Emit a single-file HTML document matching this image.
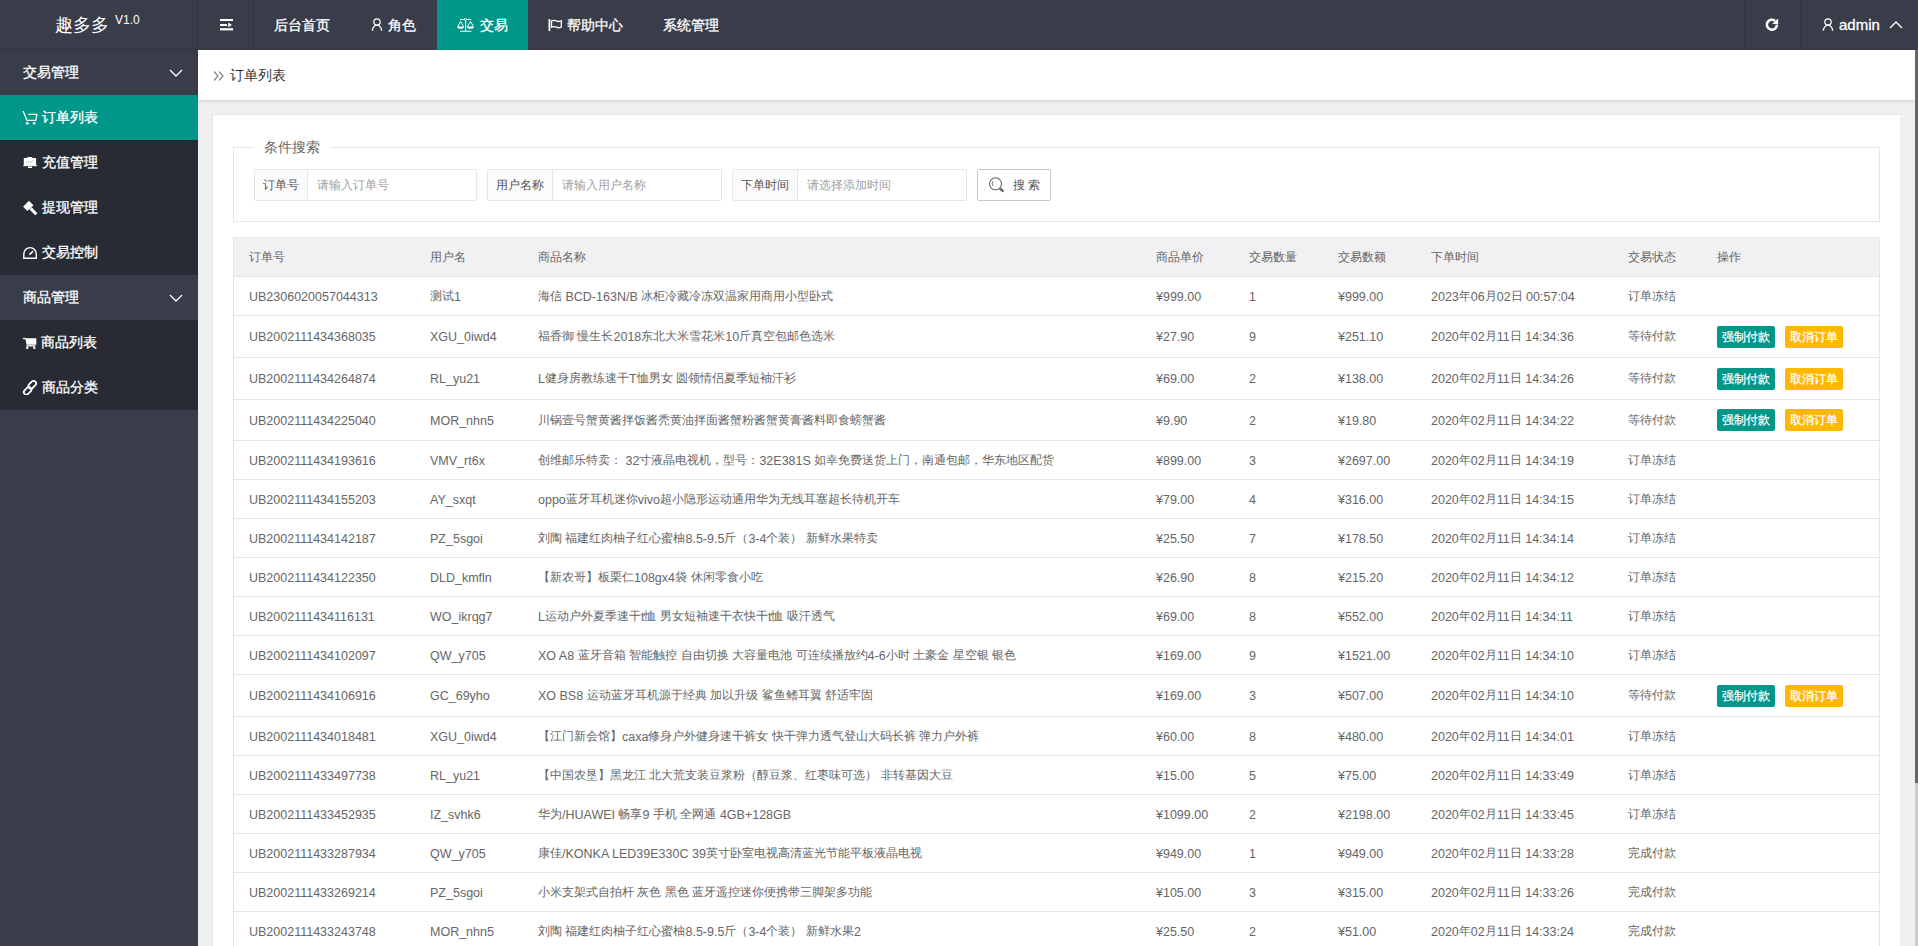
<!DOCTYPE html>
<html><head><meta charset="utf-8">
<style>
*{box-sizing:border-box;margin:0;padding:0}
html,body{width:1918px;height:946px;overflow:hidden;background:#eeeff1;font-family:"Liberation Sans",sans-serif;color:#666}
.abs{position:absolute}
.hdr{position:absolute;left:0;top:0;width:1918px;height:50px;background:#393D49}
.logo{position:absolute;left:0;top:0;width:198px;height:50px;color:#fff}
.logo .t{position:absolute;left:55px;top:13px;font-size:18px;line-height:24px;white-space:nowrap}
.logo .v{position:absolute;left:115px;top:13px;font-size:12px;line-height:14px}
.sep{position:absolute;top:0;width:1px;height:50px;background:#32363f}
.nav{position:absolute;top:0;height:50px;color:#fff;font-size:14px;line-height:50px;white-space:nowrap;-webkit-text-stroke:0.3px #fff}
.nav svg{position:absolute}
.side{position:absolute;left:0;top:50px;width:198px;height:896px;background:#393D49}
.si{position:absolute;left:0;width:198px;height:45px;line-height:45px;color:#fff;font-size:14px;white-space:nowrap;-webkit-text-stroke:0.3px #fff}
.si.g{background:#393D49}
.si.c{background:#282B33}
.si.a{background:#009688}
.si .st{position:absolute;top:0}
.si svg{position:absolute}
.bc{position:absolute;left:198px;top:50px;width:1717px;height:50px;background:#fff;box-shadow:0 1px 3px rgba(0,0,0,.12)}
.card{position:absolute;left:213px;top:115px;width:1687px;height:840px;background:#fff;box-shadow:-1px -1px 1px rgba(0,0,0,.04)}
.sb{position:absolute;left:1915px;top:50px;width:3px;height:896px;background:#cdcdcd}
.sb .th{position:absolute;left:0;top:0;width:3px;height:733px;background:#666}

.fs{position:absolute;left:20px;top:32px;width:1647px;height:75px;border:1px solid #e6e6e6}
.lg{position:absolute;left:41px;top:22px;padding:0 10px;background:#fff;font-size:14px;line-height:20px;color:#666}
.ib{position:absolute;top:54px;height:32px;border:1px solid #e6e6e6;border-radius:2px;background:#fff}
.il{position:absolute;left:0;top:0;height:30px;line-height:30px;background:#FBFBFB;border-right:1px solid #e6e6e6;font-size:12px;color:#333;text-align:center;color:#555}
.ip{position:absolute;top:0;height:30px;line-height:30px;padding-left:9px;font-size:12px;color:#a0a0a0;white-space:nowrap}
.btn{position:absolute;top:54px;width:74px;height:32px;border:1px solid #C9C9C9;border-radius:2px;background:#fff;font-size:12px;line-height:30px;color:#555}
.tb{position:absolute;border:1px solid #e6e6e6}
.th{position:absolute;background:#f1f1f3}
.hl{position:absolute;left:21px;width:1645px;height:1px;background:#e6e6e6}
.tx{position:absolute;font-size:12px;color:#666;white-space:nowrap}
.l{font-size:12.5px;position:relative;top:1px}
.bt{position:absolute;height:22px;line-height:22px;padding:0 5px;font-size:12px;color:#fff;border-radius:2px;white-space:nowrap;-webkit-text-stroke:0.25px #fff}
.bt.g{background:#009688}
.bt.y{background:#FFB800}
</style></head><body>
<div class="hdr">
  <div class="logo"><span class="t">趣多多</span><span class="v">V1.0</span></div>
  <div class="abs" style="left:0;top:49px;width:198px;height:1px;background:#2f333c"></div>
  <div class="sep" style="left:197px"></div>
  <div class="sep" style="left:253px"></div>
  <div class="nav" style="left:198px;width:55px">
    <svg style="left:22px;top:19px" width="13" height="12" viewBox="0 0 13 12"><rect x="0" y="0" width="13" height="2" fill="#fff"/><rect x="0" y="5" width="7" height="2" fill="#fff"/><path d="M8.2 3.6 L12 6 L8.2 8.2Z" fill="#fff"/><rect x="0" y="9.2" width="13" height="2.2" fill="#fff"/></svg>
  </div>
  <div class="nav" style="left:274px">后台首页</div>
  <div class="nav" style="left:370px;width:67px">
    <svg style="left:1px;top:17px" width="12" height="15" viewBox="0 0 12 15"><circle cx="6" cy="5" r="3.2" fill="none" stroke="#fff" stroke-width="1.2"/><path d="M1.4 13.8 A4.6 5.6 0 0 1 10.6 13.8" fill="none" stroke="#fff" stroke-width="1.3"/></svg>
    <span style="position:absolute;left:18px">角色</span>
  </div>
  <div class="nav" style="left:437px;width:91px;background:#009688">
    <svg style="left:20px;top:18px" width="18" height="14" viewBox="0 0 18 14"><path d="M3 1.5 H14.3 M8.6 2.3 V13.3 M3 13.3 H14.3" fill="none" stroke="#fff" stroke-width="1.1"/><circle cx="8.6" cy="1.4" r="1.1" fill="#009688" stroke="#fff" stroke-width="0.9"/><path d="M3.6 3.4 L0.6 8.7 M3.6 3.4 L6.6 8.7 M13.5 3.4 L10.4 8.7 M13.5 3.4 L16.6 8.7" fill="none" stroke="#fff" stroke-width="1"/><path d="M0.2 8.5 H7 A3.4 2.3 0 0 1 0.2 8.5Z M10.1 8.5 H17 A3.45 2.3 0 0 1 10.1 8.5Z" fill="#fff"/></svg>
    <span style="position:absolute;left:43px">交易</span>
  </div>
  <div class="nav" style="left:547px;width:80px">
    <svg style="left:1px;top:19px" width="15" height="13" viewBox="0 0 15 13"><path d="M1.4 0 V12" fill="none" stroke="#fff" stroke-width="1.8"/><path d="M3.5 1.9 Q6 0.7 8.5 1.9 Q11 3.1 13.3 1.8 V8.1 Q11 9.3 8.5 8.2 Q6 7 3.5 8.2 Z" fill="none" stroke="#fff" stroke-width="1.3"/></svg>
    <span style="position:absolute;left:20px">帮助中心</span>
  </div>
  <div class="nav" style="left:663px">系统管理</div>
  <div class="sep" style="left:1744px"></div>
  <div class="sep" style="left:1800px"></div>
  <div class="nav" style="left:1745px;width:55px">
    <svg style="left:20px;top:16px" width="15" height="16" viewBox="0 0 15 16"><path d="M11.9 9 A5 5 0 1 1 10.1 4.9" fill="none" stroke="#fff" stroke-width="2.5"/><path d="M13.1 2.4 L13.1 8.5 L7.2 7.8Z" fill="#fff"/></svg>
  </div>
  <div class="nav" style="left:1801px;width:117px">
    <svg style="left:21px;top:17px" width="12" height="15" viewBox="0 0 12 15"><circle cx="6" cy="5" r="3.2" fill="none" stroke="#fff" stroke-width="1.2"/><path d="M1.4 13.8 A4.6 5.6 0 0 1 10.6 13.8" fill="none" stroke="#fff" stroke-width="1.3"/></svg>
    <span style="position:absolute;left:38px;top:0px;font-size:15px">admin</span>
    <svg style="left:88px;top:21px" width="14" height="8" viewBox="0 0 14 8"><path d="M1 7 L7 1 L13 7" fill="none" stroke="#fff" stroke-width="1.3"/></svg>
  </div>
</div>

<div class="side">
  <div class="si g" style="top:0"><span class="st" style="left:23px">交易管理</span>
    <svg style="left:169px;top:19px" width="14" height="8" viewBox="0 0 14 8"><path d="M1 1 L7 7 L13 1" fill="none" stroke="#fff" stroke-width="1.3"/></svg></div>
  <div class="si a" style="top:45px"><span class="st" style="left:42px">订单列表</span>
    <svg style="left:22px;top:15px" width="16" height="16" viewBox="0 0 16 16"><path d="M1.1 1.1 L4.9 10.3 H13.8 L15 4.4 H6.2" fill="none" stroke="#fff" stroke-width="1.3" stroke-linejoin="round"/><circle cx="5.3" cy="13.3" r="1.4" fill="#fff"/><circle cx="12.2" cy="13.3" r="1.4" fill="#fff"/></svg></div>
  <div class="si c" style="top:90px"><span class="st" style="left:42px">充值管理</span>
    <svg style="left:23px;top:16px" width="14" height="13" viewBox="0 0 14 13"><rect x="4.4" y="1" width="4.8" height="1.3" fill="#fff"/><rect x="0.8" y="2" width="12.3" height="7.5" fill="#fff"/><rect x="0.3" y="9.2" width="13.6" height="1" fill="#fff"/><rect x="5" y="10.5" width="4" height="1.5" fill="#fff"/><path d="M3 7 L5.5 5.5 L7.5 6.3 L10.5 4" fill="none" stroke="#9aa" stroke-width="0.6"/></svg></div>
  <div class="si c" style="top:135px"><span class="st" style="left:42px">提现管理</span>
    <svg style="left:22px;top:15px" width="16" height="16" viewBox="0 0 16 16"><path d="M6.9 0.8 L11.5 5.2 L5.5 11 L1.1 6.7Z" fill="#fff"/><path d="M8.6 8.4 L14.3 14.3" stroke="#fff" stroke-width="3"/></svg></div>
  <div class="si c" style="top:180px"><span class="st" style="left:42px">交易控制</span>
    <svg style="left:22px;top:15px" width="16" height="16" viewBox="0 0 16 16"><path d="M1.8 13.3 V8.9 A6.25 6.25 0 0 1 14.3 8.9 V13.3 Z" fill="none" stroke="#fff" stroke-width="1.4"/><path d="M7.4 9.7 L11.2 6.2" stroke="#fff" stroke-width="1.6"/></svg></div>
  <div class="si g" style="top:225px"><span class="st" style="left:23px">商品管理</span>
    <svg style="left:169px;top:19px" width="14" height="8" viewBox="0 0 14 8"><path d="M1 1 L7 7 L13 1" fill="none" stroke="#fff" stroke-width="1.3"/></svg></div>
  <div class="si c" style="top:270px"><span class="st" style="left:41px">商品列表</span>
    <svg style="left:22px;top:17px" width="15" height="13" viewBox="0 0 15 13"><rect x="0.8" y="0.9" width="3" height="1.3" fill="#fff"/><path d="M3.2 1.3 H14.3 V7.7 H4.6Z" fill="#fff"/><rect x="4.3" y="8.2" width="9" height="1.3" fill="#fff"/><rect x="4.3" y="9.5" width="2" height="2.5" fill="#fff"/><rect x="11.3" y="9.5" width="2" height="2.5" fill="#fff"/></svg></div>
  <div class="si c" style="top:315px"><span class="st" style="left:42px">商品分类</span>
    <svg style="left:22px;top:14px" width="16" height="16" viewBox="0 0 16 16"><rect x="7.8" y="1.4" width="5" height="8.6" rx="2.5" transform="rotate(45 10.3 5.7)" fill="none" stroke="#fff" stroke-width="1.8"/><rect x="3.1" y="7.6" width="5" height="8.6" rx="2.5" transform="rotate(45 5.6 11.9)" fill="none" stroke="#fff" stroke-width="1.8"/></svg></div>
</div>

<div class="bc">
  <svg class="abs" style="left:15px;top:20px" width="12" height="12" viewBox="0 0 12 12"><path d="M1 1.5 L5 6 L1 10.5 M6 1.5 L10 6 L6 10.5" fill="none" stroke="#888" stroke-width="1.3"/></svg>
  <span class="abs" style="left:32px;top:0;line-height:50px;font-size:14px;color:#333">订单列表</span>
</div>

<div class="card">
<div class="fs"></div><div class="lg">条件搜索</div>
<div class="ib" style="left:41px;width:223px"><div class="il" style="width:53px">订单号</div><div class="ip" style="left:53px">请输入订单号</div></div>
<div class="ib" style="left:274px;width:235px"><div class="il" style="width:65px">用户名称</div><div class="ip" style="left:65px">请输入用户名称</div></div>
<div class="ib" style="left:519px;width:235px"><div class="il" style="width:65px">下单时间</div><div class="ip" style="left:65px">请选择添加时间</div></div>
<div class="btn" style="left:764px"><svg class="abs" style="left:10px;top:6px" width="17" height="17" viewBox="0 0 17 17"><circle cx="7.5" cy="7.8" r="6" fill="none" stroke="#666" stroke-width="1.1"/><path d="M12 12.3 L15.4 15.7" stroke="#666" stroke-width="2.4"/><path d="M4.6 5.5 Q3.9 7.7 4.6 9.8" fill="none" stroke="#666" stroke-width="0.9"/></svg><span class="abs" style="left:35px;top:0">搜&nbsp;索</span></div>
<div class="tb" style="left:20px;top:122px;width:1647px;height:714px"></div>
<div class="th" style="left:21px;top:123px;width:1645px;height:38px"></div>
<div class="tx" style="left:36px;top:123px;line-height:38px">订单号</div>
<div class="tx" style="left:217px;top:123px;line-height:38px">用户名</div>
<div class="tx" style="left:325px;top:123px;line-height:38px">商品名称</div>
<div class="tx" style="left:943px;top:123px;line-height:38px">商品单价</div>
<div class="tx" style="left:1036px;top:123px;line-height:38px">交易数量</div>
<div class="tx" style="left:1125px;top:123px;line-height:38px">交易数额</div>
<div class="tx" style="left:1218px;top:123px;line-height:38px">下单时间</div>
<div class="tx" style="left:1415px;top:123px;line-height:38px">交易状态</div>
<div class="tx" style="left:1504px;top:123px;line-height:38px">操作</div>
<div class="hl" style="top:161px"></div>
<div class="tx" style="left:36px;top:162px;line-height:38px"><span class="l">UB2306020057044313</span></div>
<div class="tx" style="left:217px;top:162px;line-height:38px">测试<span class="l">1</span></div>
<div class="tx" style="left:325px;top:162px;line-height:38px">海信<span class="l"> BCD-163N/B </span>冰柜冷藏冷冻双温家用商用小型卧式</div>
<div class="tx" style="left:943px;top:162px;line-height:38px"><span class="l">¥999.00</span></div>
<div class="tx" style="left:1036px;top:162px;line-height:38px"><span class="l">1</span></div>
<div class="tx" style="left:1125px;top:162px;line-height:38px"><span class="l">¥999.00</span></div>
<div class="tx" style="left:1218px;top:162px;line-height:38px"><span class="l">2023</span>年<span class="l">06</span>月<span class="l">02</span>日<span class="l"> 00:57:04</span></div>
<div class="tx" style="left:1415px;top:162px;line-height:38px">订单冻结</div>
<div class="hl" style="top:200px"></div>
<div class="tx" style="left:36px;top:201px;line-height:41px"><span class="l">UB2002111434368035</span></div>
<div class="tx" style="left:217px;top:201px;line-height:41px"><span class="l">XGU_0iwd4</span></div>
<div class="tx" style="left:325px;top:201px;line-height:41px">福香御<span class="l"> </span>慢生长<span class="l">2018</span>东北大米雪花米<span class="l">10</span>斤真空包邮色选米</div>
<div class="tx" style="left:943px;top:201px;line-height:41px"><span class="l">¥27.90</span></div>
<div class="tx" style="left:1036px;top:201px;line-height:41px"><span class="l">9</span></div>
<div class="tx" style="left:1125px;top:201px;line-height:41px"><span class="l">¥251.10</span></div>
<div class="tx" style="left:1218px;top:201px;line-height:41px"><span class="l">2020</span>年<span class="l">02</span>月<span class="l">11</span>日<span class="l"> 14:34:36</span></div>
<div class="tx" style="left:1415px;top:201px;line-height:41px">等待付款</div>
<div class="bt g" style="left:1504px;top:211px">强制付款</div>
<div class="bt y" style="left:1572px;top:211px">取消订单</div>
<div class="hl" style="top:242px"></div>
<div class="tx" style="left:36px;top:243px;line-height:41px"><span class="l">UB2002111434264874</span></div>
<div class="tx" style="left:217px;top:243px;line-height:41px"><span class="l">RL_yu21</span></div>
<div class="tx" style="left:325px;top:243px;line-height:41px"><span class="l">L</span>健身房教练速干<span class="l">T</span>恤男女<span class="l"> </span>圆领情侣夏季短袖汗衫</div>
<div class="tx" style="left:943px;top:243px;line-height:41px"><span class="l">¥69.00</span></div>
<div class="tx" style="left:1036px;top:243px;line-height:41px"><span class="l">2</span></div>
<div class="tx" style="left:1125px;top:243px;line-height:41px"><span class="l">¥138.00</span></div>
<div class="tx" style="left:1218px;top:243px;line-height:41px"><span class="l">2020</span>年<span class="l">02</span>月<span class="l">11</span>日<span class="l"> 14:34:26</span></div>
<div class="tx" style="left:1415px;top:243px;line-height:41px">等待付款</div>
<div class="bt g" style="left:1504px;top:253px">强制付款</div>
<div class="bt y" style="left:1572px;top:253px">取消订单</div>
<div class="hl" style="top:284px"></div>
<div class="tx" style="left:36px;top:285px;line-height:40px"><span class="l">UB2002111434225040</span></div>
<div class="tx" style="left:217px;top:285px;line-height:40px"><span class="l">MOR_nhn5</span></div>
<div class="tx" style="left:325px;top:285px;line-height:40px">川锅壹号蟹黄酱拌饭酱秃黄油拌面酱蟹粉酱蟹黄膏酱料即食螃蟹酱</div>
<div class="tx" style="left:943px;top:285px;line-height:40px"><span class="l">¥9.90</span></div>
<div class="tx" style="left:1036px;top:285px;line-height:40px"><span class="l">2</span></div>
<div class="tx" style="left:1125px;top:285px;line-height:40px"><span class="l">¥19.80</span></div>
<div class="tx" style="left:1218px;top:285px;line-height:40px"><span class="l">2020</span>年<span class="l">02</span>月<span class="l">11</span>日<span class="l"> 14:34:22</span></div>
<div class="tx" style="left:1415px;top:285px;line-height:40px">等待付款</div>
<div class="bt g" style="left:1504px;top:294px">强制付款</div>
<div class="bt y" style="left:1572px;top:294px">取消订单</div>
<div class="hl" style="top:325px"></div>
<div class="tx" style="left:36px;top:326px;line-height:38px"><span class="l">UB2002111434193616</span></div>
<div class="tx" style="left:217px;top:326px;line-height:38px"><span class="l">VMV_rt6x</span></div>
<div class="tx" style="left:325px;top:326px;line-height:38px">创维邮乐特卖：<span class="l"> 32</span>寸液晶电视机，型号：<span class="l">32E381S </span>如幸免费送货上门，南通包邮，华东地区配货</div>
<div class="tx" style="left:943px;top:326px;line-height:38px"><span class="l">¥899.00</span></div>
<div class="tx" style="left:1036px;top:326px;line-height:38px"><span class="l">3</span></div>
<div class="tx" style="left:1125px;top:326px;line-height:38px"><span class="l">¥2697.00</span></div>
<div class="tx" style="left:1218px;top:326px;line-height:38px"><span class="l">2020</span>年<span class="l">02</span>月<span class="l">11</span>日<span class="l"> 14:34:19</span></div>
<div class="tx" style="left:1415px;top:326px;line-height:38px">订单冻结</div>
<div class="hl" style="top:364px"></div>
<div class="tx" style="left:36px;top:365px;line-height:38px"><span class="l">UB2002111434155203</span></div>
<div class="tx" style="left:217px;top:365px;line-height:38px"><span class="l">AY_sxqt</span></div>
<div class="tx" style="left:325px;top:365px;line-height:38px"><span class="l">oppo</span>蓝牙耳机迷你<span class="l">vivo</span>超小隐形运动通用华为无线耳塞超长待机开车</div>
<div class="tx" style="left:943px;top:365px;line-height:38px"><span class="l">¥79.00</span></div>
<div class="tx" style="left:1036px;top:365px;line-height:38px"><span class="l">4</span></div>
<div class="tx" style="left:1125px;top:365px;line-height:38px"><span class="l">¥316.00</span></div>
<div class="tx" style="left:1218px;top:365px;line-height:38px"><span class="l">2020</span>年<span class="l">02</span>月<span class="l">11</span>日<span class="l"> 14:34:15</span></div>
<div class="tx" style="left:1415px;top:365px;line-height:38px">订单冻结</div>
<div class="hl" style="top:403px"></div>
<div class="tx" style="left:36px;top:404px;line-height:38px"><span class="l">UB2002111434142187</span></div>
<div class="tx" style="left:217px;top:404px;line-height:38px"><span class="l">PZ_5sgoi</span></div>
<div class="tx" style="left:325px;top:404px;line-height:38px">刘陶<span class="l"> </span>福建红肉柚子红心蜜柚<span class="l">8.5-9.5</span>斤（<span class="l">3-4</span>个装）<span class="l"> </span>新鲜水果特卖</div>
<div class="tx" style="left:943px;top:404px;line-height:38px"><span class="l">¥25.50</span></div>
<div class="tx" style="left:1036px;top:404px;line-height:38px"><span class="l">7</span></div>
<div class="tx" style="left:1125px;top:404px;line-height:38px"><span class="l">¥178.50</span></div>
<div class="tx" style="left:1218px;top:404px;line-height:38px"><span class="l">2020</span>年<span class="l">02</span>月<span class="l">11</span>日<span class="l"> 14:34:14</span></div>
<div class="tx" style="left:1415px;top:404px;line-height:38px">订单冻结</div>
<div class="hl" style="top:442px"></div>
<div class="tx" style="left:36px;top:443px;line-height:38px"><span class="l">UB2002111434122350</span></div>
<div class="tx" style="left:217px;top:443px;line-height:38px"><span class="l">DLD_kmfln</span></div>
<div class="tx" style="left:325px;top:443px;line-height:38px">【新农哥】板栗仁<span class="l">108gx4</span>袋<span class="l"> </span>休闲零食小吃</div>
<div class="tx" style="left:943px;top:443px;line-height:38px"><span class="l">¥26.90</span></div>
<div class="tx" style="left:1036px;top:443px;line-height:38px"><span class="l">8</span></div>
<div class="tx" style="left:1125px;top:443px;line-height:38px"><span class="l">¥215.20</span></div>
<div class="tx" style="left:1218px;top:443px;line-height:38px"><span class="l">2020</span>年<span class="l">02</span>月<span class="l">11</span>日<span class="l"> 14:34:12</span></div>
<div class="tx" style="left:1415px;top:443px;line-height:38px">订单冻结</div>
<div class="hl" style="top:481px"></div>
<div class="tx" style="left:36px;top:482px;line-height:38px"><span class="l">UB2002111434116131</span></div>
<div class="tx" style="left:217px;top:482px;line-height:38px"><span class="l">WO_ikrqg7</span></div>
<div class="tx" style="left:325px;top:482px;line-height:38px"><span class="l">L</span>运动户外夏季速干<span class="l">t</span>恤<span class="l"> </span>男女短袖速干衣快干<span class="l">t</span>恤<span class="l"> </span>吸汗透气</div>
<div class="tx" style="left:943px;top:482px;line-height:38px"><span class="l">¥69.00</span></div>
<div class="tx" style="left:1036px;top:482px;line-height:38px"><span class="l">8</span></div>
<div class="tx" style="left:1125px;top:482px;line-height:38px"><span class="l">¥552.00</span></div>
<div class="tx" style="left:1218px;top:482px;line-height:38px"><span class="l">2020</span>年<span class="l">02</span>月<span class="l">11</span>日<span class="l"> 14:34:11</span></div>
<div class="tx" style="left:1415px;top:482px;line-height:38px">订单冻结</div>
<div class="hl" style="top:520px"></div>
<div class="tx" style="left:36px;top:521px;line-height:38px"><span class="l">UB2002111434102097</span></div>
<div class="tx" style="left:217px;top:521px;line-height:38px"><span class="l">QW_y705</span></div>
<div class="tx" style="left:325px;top:521px;line-height:38px"><span class="l">XO A8 </span>蓝牙音箱<span class="l"> </span>智能触控<span class="l"> </span>自由切换<span class="l"> </span>大容量电池<span class="l"> </span>可连续播放约<span class="l">4-6</span>小时<span class="l"> </span>土豪金<span class="l"> </span>星空银<span class="l"> </span>银色</div>
<div class="tx" style="left:943px;top:521px;line-height:38px"><span class="l">¥169.00</span></div>
<div class="tx" style="left:1036px;top:521px;line-height:38px"><span class="l">9</span></div>
<div class="tx" style="left:1125px;top:521px;line-height:38px"><span class="l">¥1521.00</span></div>
<div class="tx" style="left:1218px;top:521px;line-height:38px"><span class="l">2020</span>年<span class="l">02</span>月<span class="l">11</span>日<span class="l"> 14:34:10</span></div>
<div class="tx" style="left:1415px;top:521px;line-height:38px">订单冻结</div>
<div class="hl" style="top:559px"></div>
<div class="tx" style="left:36px;top:560px;line-height:41px"><span class="l">UB2002111434106916</span></div>
<div class="tx" style="left:217px;top:560px;line-height:41px"><span class="l">GC_69yho</span></div>
<div class="tx" style="left:325px;top:560px;line-height:41px"><span class="l">XO BS8 </span>运动蓝牙耳机源于经典<span class="l"> </span>加以升级<span class="l"> </span>鲨鱼鳍耳翼<span class="l"> </span>舒适牢固</div>
<div class="tx" style="left:943px;top:560px;line-height:41px"><span class="l">¥169.00</span></div>
<div class="tx" style="left:1036px;top:560px;line-height:41px"><span class="l">3</span></div>
<div class="tx" style="left:1125px;top:560px;line-height:41px"><span class="l">¥507.00</span></div>
<div class="tx" style="left:1218px;top:560px;line-height:41px"><span class="l">2020</span>年<span class="l">02</span>月<span class="l">11</span>日<span class="l"> 14:34:10</span></div>
<div class="tx" style="left:1415px;top:560px;line-height:41px">等待付款</div>
<div class="bt g" style="left:1504px;top:570px">强制付款</div>
<div class="bt y" style="left:1572px;top:570px">取消订单</div>
<div class="hl" style="top:601px"></div>
<div class="tx" style="left:36px;top:602px;line-height:38px"><span class="l">UB2002111434018481</span></div>
<div class="tx" style="left:217px;top:602px;line-height:38px"><span class="l">XGU_0iwd4</span></div>
<div class="tx" style="left:325px;top:602px;line-height:38px">【江门新会馆】<span class="l">caxa</span>修身户外健身速干裤女<span class="l"> </span>快干弹力透气登山大码长裤<span class="l"> </span>弹力户外裤</div>
<div class="tx" style="left:943px;top:602px;line-height:38px"><span class="l">¥60.00</span></div>
<div class="tx" style="left:1036px;top:602px;line-height:38px"><span class="l">8</span></div>
<div class="tx" style="left:1125px;top:602px;line-height:38px"><span class="l">¥480.00</span></div>
<div class="tx" style="left:1218px;top:602px;line-height:38px"><span class="l">2020</span>年<span class="l">02</span>月<span class="l">11</span>日<span class="l"> 14:34:01</span></div>
<div class="tx" style="left:1415px;top:602px;line-height:38px">订单冻结</div>
<div class="hl" style="top:640px"></div>
<div class="tx" style="left:36px;top:641px;line-height:38px"><span class="l">UB2002111433497738</span></div>
<div class="tx" style="left:217px;top:641px;line-height:38px"><span class="l">RL_yu21</span></div>
<div class="tx" style="left:325px;top:641px;line-height:38px">【中国农垦】黑龙江<span class="l"> </span>北大荒支装豆浆粉（醇豆浆、红枣味可选）<span class="l"> </span>非转基因大豆</div>
<div class="tx" style="left:943px;top:641px;line-height:38px"><span class="l">¥15.00</span></div>
<div class="tx" style="left:1036px;top:641px;line-height:38px"><span class="l">5</span></div>
<div class="tx" style="left:1125px;top:641px;line-height:38px"><span class="l">¥75.00</span></div>
<div class="tx" style="left:1218px;top:641px;line-height:38px"><span class="l">2020</span>年<span class="l">02</span>月<span class="l">11</span>日<span class="l"> 14:33:49</span></div>
<div class="tx" style="left:1415px;top:641px;line-height:38px">订单冻结</div>
<div class="hl" style="top:679px"></div>
<div class="tx" style="left:36px;top:680px;line-height:38px"><span class="l">UB2002111433452935</span></div>
<div class="tx" style="left:217px;top:680px;line-height:38px"><span class="l">IZ_svhk6</span></div>
<div class="tx" style="left:325px;top:680px;line-height:38px">华为<span class="l">/HUAWEI </span>畅享<span class="l">9 </span>手机<span class="l"> </span>全网通<span class="l"> 4GB+128GB</span></div>
<div class="tx" style="left:943px;top:680px;line-height:38px"><span class="l">¥1099.00</span></div>
<div class="tx" style="left:1036px;top:680px;line-height:38px"><span class="l">2</span></div>
<div class="tx" style="left:1125px;top:680px;line-height:38px"><span class="l">¥2198.00</span></div>
<div class="tx" style="left:1218px;top:680px;line-height:38px"><span class="l">2020</span>年<span class="l">02</span>月<span class="l">11</span>日<span class="l"> 14:33:45</span></div>
<div class="tx" style="left:1415px;top:680px;line-height:38px">订单冻结</div>
<div class="hl" style="top:718px"></div>
<div class="tx" style="left:36px;top:719px;line-height:38px"><span class="l">UB2002111433287934</span></div>
<div class="tx" style="left:217px;top:719px;line-height:38px"><span class="l">QW_y705</span></div>
<div class="tx" style="left:325px;top:719px;line-height:38px">康佳<span class="l">/KONKA LED39E330C 39</span>英寸卧室电视高清蓝光节能平板液晶电视</div>
<div class="tx" style="left:943px;top:719px;line-height:38px"><span class="l">¥949.00</span></div>
<div class="tx" style="left:1036px;top:719px;line-height:38px"><span class="l">1</span></div>
<div class="tx" style="left:1125px;top:719px;line-height:38px"><span class="l">¥949.00</span></div>
<div class="tx" style="left:1218px;top:719px;line-height:38px"><span class="l">2020</span>年<span class="l">02</span>月<span class="l">11</span>日<span class="l"> 14:33:28</span></div>
<div class="tx" style="left:1415px;top:719px;line-height:38px">完成付款</div>
<div class="hl" style="top:757px"></div>
<div class="tx" style="left:36px;top:758px;line-height:38px"><span class="l">UB2002111433269214</span></div>
<div class="tx" style="left:217px;top:758px;line-height:38px"><span class="l">PZ_5sgoi</span></div>
<div class="tx" style="left:325px;top:758px;line-height:38px">小米支架式自拍杆<span class="l"> </span>灰色<span class="l"> </span>黑色<span class="l"> </span>蓝牙遥控迷你便携带三脚架多功能</div>
<div class="tx" style="left:943px;top:758px;line-height:38px"><span class="l">¥105.00</span></div>
<div class="tx" style="left:1036px;top:758px;line-height:38px"><span class="l">3</span></div>
<div class="tx" style="left:1125px;top:758px;line-height:38px"><span class="l">¥315.00</span></div>
<div class="tx" style="left:1218px;top:758px;line-height:38px"><span class="l">2020</span>年<span class="l">02</span>月<span class="l">11</span>日<span class="l"> 14:33:26</span></div>
<div class="tx" style="left:1415px;top:758px;line-height:38px">完成付款</div>
<div class="hl" style="top:796px"></div>
<div class="tx" style="left:36px;top:797px;line-height:38px"><span class="l">UB2002111433243748</span></div>
<div class="tx" style="left:217px;top:797px;line-height:38px"><span class="l">MOR_nhn5</span></div>
<div class="tx" style="left:325px;top:797px;line-height:38px">刘陶<span class="l"> </span>福建红肉柚子红心蜜柚<span class="l">8.5-9.5</span>斤（<span class="l">3-4</span>个装）<span class="l"> </span>新鲜水果<span class="l">2</span></div>
<div class="tx" style="left:943px;top:797px;line-height:38px"><span class="l">¥25.50</span></div>
<div class="tx" style="left:1036px;top:797px;line-height:38px"><span class="l">2</span></div>
<div class="tx" style="left:1125px;top:797px;line-height:38px"><span class="l">¥51.00</span></div>
<div class="tx" style="left:1218px;top:797px;line-height:38px"><span class="l">2020</span>年<span class="l">02</span>月<span class="l">11</span>日<span class="l"> 14:33:24</span></div>
<div class="tx" style="left:1415px;top:797px;line-height:38px">完成付款</div>
</div>

<div class="sb"><div class="th"></div></div>
</body></html>
